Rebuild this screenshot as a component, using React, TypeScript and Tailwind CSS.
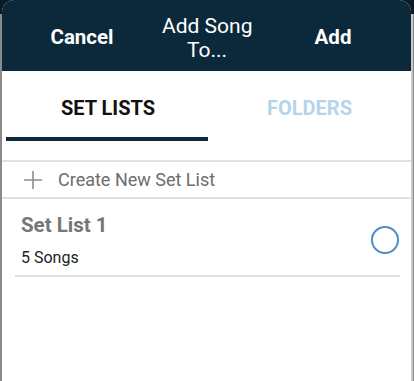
import React from "react";

export default function App() {
  return (
    <div
      className="relative w-[414px] h-[381px] overflow-hidden bg-[#c9c9c9]"
      style={{ fontFamily: "Roboto, 'Noto Sans', sans-serif" }}
    >
      <div className="flex h-full">
        <div className="w-[2px] bg-[#8a8a8a]" />
        <div className="flex-1" />
        <div className="w-[1px] bg-[#8a8a8a]" />
      </div>
      <div className="absolute left-0 right-0 top-0 h-[14px] bg-[#0b1a23]" />
      <div className="absolute left-[2px] right-[3px] top-0 bottom-0 flex flex-col bg-white rounded-t-[12px] overflow-hidden">
        <div className="h-[71px] shrink-0 bg-[#0b293b] flex items-center text-white pt-[3px]">
          <div className="w-[160px] shrink-0 flex justify-center text-[20.5px] font-bold">Cancel</div>
          <div className="w-[90px] shrink-0 text-center text-[21px] leading-[24px] pt-[1px] whitespace-nowrap">
            Add Song
            <br />
            To...
          </div>
          <div className="w-[162px] shrink-0 flex justify-center text-[20.5px] font-bold">Add</div>
        </div>
        <div className="flex h-[70px] shrink-0">
          <div className="w-[206px] flex flex-col">
            <div className="flex-1 flex items-center justify-center pl-[6px] text-[20px] font-bold text-[#111] pt-[8px]">
              SET LISTS
            </div>
            <div className="h-[4px] ml-[4px] bg-[#0b293b]" />
          </div>
          <div className="flex-1 flex flex-col">
            <div className="flex-1 flex items-center justify-center text-[20px] font-bold text-[#b4d5ea] pt-[8px]">
              FOLDERS
            </div>
            <div className="h-[4px]" />
          </div>
        </div>
        <div className="h-[19px] shrink-0" />
        <div className="border-t-[2px] border-b-[2px] border-[#e0e0e0] h-[39px] shrink-0 flex items-center">
          <svg width="20" height="20" viewBox="0 0 20 20" className="ml-[21px]">
            <path d="M10 1v18M1 10h18" stroke="#8d8d8d" strokeWidth="1.6" />
          </svg>
          <span className="ml-[15px] text-[18px] text-[#6d6d6d]">Create New Set List</span>
        </div>
        <div className="ml-[13px] mr-[11px] border-b-[2px] border-[#e0e0e0] h-[78px] shrink-0 flex items-start">
          <div className="flex-1 pl-[6px] pt-[14px]">
            <div className="text-[20.5px] font-bold text-[#767676] leading-[24px]">Set List 1</div>
            <div className="text-[16px] text-[#222] mt-[11px] leading-[20px]">5 Songs</div>
          </div>
          <div className="self-center w-[28px] h-[28px] rounded-full border-[2px] border-[#4a8fc7] mr-[1px] mt-[6px]" />
        </div>
      </div>
    </div>
  );
}
